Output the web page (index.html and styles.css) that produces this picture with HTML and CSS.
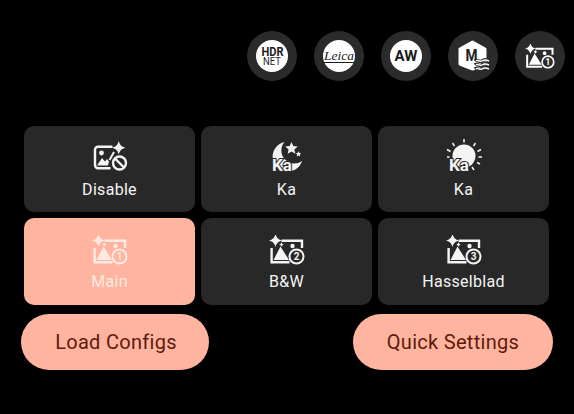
FILE: index.html
```html
<!DOCTYPE html>
<html lang="en">
<head>
<meta charset="utf-8">
<title>Camera settings</title>
<link rel="stylesheet" href="styles.css">
</head>
<body>
<svg class="defs" aria-hidden="true">
  <symbol id="sparkle" viewBox="-10 -10 20 20"><path d="M0-10C1.500-4.500 4-1.500 10 0 4 1.500 1.500 4.500 0 10-1.500 4.500-4 1.500-10 0-4-1.500-1.500-4.500 0-10Z" fill="currentColor"/></symbol>
  <symbol id="lut" viewBox="0 0 36 30">
    <use href="#sparkle" x="0" y="-1" width="13" height="13"/>
    <use href="#sparkle" x="10" y="7" width="5" height="5"/>
    <path d="M12.500 5.800H33V13M2.600 13V27.200H20.500" fill="none" stroke="currentColor" stroke-width="2.400"/>
    <path d="M11.500 11.500 20 25H4.500Z" fill="currentColor"/>
    <circle cx="23.500" cy="11" r="2.200" fill="currentColor"/>
    <circle cx="27.500" cy="21.500" r="7" fill="none" stroke="currentColor" stroke-width="2"/>
  </symbol>
</svg>

<div class="status-row">
  <div class="chip"><div class="disc hdr"><span class="hdr-top">HDR</span><span class="hdr-bottom">NET</span></div></div>
  <div class="chip"><div class="disc"><span class="leica">Leica</span></div></div>
  <div class="chip"><div class="disc"><span class="aw">AW</span></div></div>
  <div class="chip">
    <svg class="chip-full" viewBox="0 0 50 50">
      <path d="M24.500 11 37 18V33L24.500 38 12 33V18Z" fill="#fff" stroke="#fff" stroke-width="3" stroke-linejoin="round"/>
      <text class="m-letter" x="17.500" y="30" textLength="12" lengthAdjust="spacingAndGlyphs">M</text>
      <path d="M27 30c2-2 5 2 7 0s4-2 8 0M27 34c2-2 5 2 7 0s4-2 8 0M27 38c2-2 5 2 7 0s4-2 8 0" fill="none" stroke="#2b2b2b" stroke-width="3.500"/>
      <path d="M28 30c2-2 4 1.500 6 0s4-1.500 7 0M28 34c2-2 4 1.500 6 0s4-1.500 7 0M28 38c2-2 4 1.500 6 0s4-1.500 7 0" fill="none" stroke="#fff" stroke-width="1.500"/>
    </svg>
  </div>
  <div class="chip">
    <svg class="chip-icon" viewBox="0 0 36 30"><use href="#lut"/><text class="num" x="27.500" y="25.200">1</text></svg>
  </div>
</div>

<div class="tiles">
  <div class="tile">
    <svg class="tile-icon" viewBox="0 0 36 30">
      <path d="M18.500 25.300H6a3 3 0 0 1-3-3V6.700a3 3 0 0 1 3-3H20.500" fill="none" stroke="currentColor" stroke-width="2.400"/>
      <circle cx="9.500" cy="10" r="2.400" fill="currentColor"/>
      <path d="M5 22.500 10 15 13 18.500 15 16 17 18.500 16 22.500Z" fill="currentColor"/>
      <path d="M17.500 17 22 9" stroke="currentColor" stroke-width="2"/>
      <use href="#sparkle" x="20" y="-2" width="13.500" height="13.500"/>
      <circle cx="27.500" cy="20" r="6.500" fill="none" stroke="currentColor" stroke-width="2.400"/>
      <path d="M23 15.500 32 24.500" stroke="currentColor" stroke-width="2.400"/>
    </svg>
    <span class="label">Disable</span>
  </div>
  <div class="tile">
    <svg class="tile-icon" viewBox="0 0 36 30">
      <path d="M15.500-1A15 15 0 1 0 33 18 13 13 0 0 1 15.500-1Z" fill="currentColor"/>
      <path d="M22.500-1 24.300 3 28.700 3.500 25.400 6.400 26.300 10.800 22.500 8.500 18.700 10.800 19.600 6.400 16.300 3.500 20.700 3Z" fill="currentColor"/>
      <path d="M29.500 8 30.300 10 32.300 10.200 30.800 11.500 31.200 13.500 29.500 12.400 27.800 13.500 28.200 11.500 26.700 10.200 28.700 10Z" fill="currentColor"/>
      <text class="ka" x="3" y="28">Ka</text>
    </svg>
    <span class="label">Ka</span>
  </div>
  <div class="tile">
    <svg class="tile-icon" viewBox="0 0 36 30">
      <circle cx="18" cy="13" r="11.500" fill="currentColor"/>
      <path d="M18-4V-.500M6.500 0 8.500 3M29.500 0 27.500 3M1 6.500 4.500 8.500M35 6.500 31.500 8.500M1 14H3.500M32.500 14H36M34 21 31 19.500M28 27 26 24" stroke="currentColor" stroke-width="1.500" fill="none"/>
      <text class="ka" x="3" y="28">Ka</text>
    </svg>
    <span class="label">Ka</span>
  </div>
  <div class="tile active">
    <svg class="tile-icon" viewBox="0 0 36 30"><use href="#lut"/><text class="num" x="27.500" y="25.200">1</text></svg>
    <span class="label">Main</span>
  </div>
  <div class="tile">
    <svg class="tile-icon" viewBox="0 0 36 30"><use href="#lut"/><text class="num" x="27.500" y="25.200">2</text></svg>
    <span class="label">B&amp;W</span>
  </div>
  <div class="tile">
    <svg class="tile-icon" viewBox="0 0 36 30"><use href="#lut"/><text class="num" x="27.500" y="25.200">3</text></svg>
    <span class="label">Hasselblad</span>
  </div>
</div>

<div class="actions">
  <button class="pill pill-load">Load Configs</button>
  <button class="pill pill-quick">Quick Settings</button>
</div>
</body>
</html>
```
FILE: styles.css
```css
* { box-sizing: border-box; }

html, body { margin: 0; height: 100%; }

body {
  width: 574px;
  height: 414px;
  overflow: hidden;
  background: #000;
  font-family: Roboto, "Liberation Sans", sans-serif;
  color: #f1f1f1;
}

.defs { position: absolute; width: 0; height: 0; }

.status-row {
  display: flex;
  justify-content: flex-end;
  gap: 17px;
  padding: 31px 9px 0 0;
}

.chip {
  width: 50px;
  height: 50px;
  border-radius: 50%;
  background: #2b2b2b;
  display: flex;
  align-items: center;
  justify-content: center;
  color: #fff;
}

.disc {
  width: 32px;
  height: 32px;
  border-radius: 50%;
  background: #fff;
  color: #1c1c1c;
  display: flex;
  flex-direction: column;
  align-items: center;
  justify-content: center;
}

.hdr-top,
.hdr-bottom {
  display: block;
  transform: scaleX(0.82);
}

.hdr-top { font-size: 13.5px; font-weight: 700; line-height: 10px; }
.hdr-bottom { font-size: 11.5px; font-weight: 400; line-height: 9px; margin-top: 1px; }

.leica {
  font-family: "Liberation Serif", serif;
  font-style: italic;
  font-weight: 400;
  font-size: 13.5px;
  line-height: 13px;
  border-bottom: 1px solid #1c1c1c;
}

.aw { font-size: 15px; font-weight: 700; line-height: 16px; }

.chip-full { width: 50px; height: 50px; }
.chip-icon { width: 30px; height: 25px; }

.m-letter { font-size: 17px; font-weight: 700; fill: #1c1c1c; }

.num {
  font-size: 10px;
  font-weight: 700;
  text-anchor: middle;
  fill: currentColor;
}

.ka {
  font-size: 17px;
  font-weight: 700;
  fill: currentColor;
  stroke: #282828;
  stroke-width: 2px;
  paint-order: stroke;
}

.tiles {
  display: grid;
  grid-template-columns: repeat(3, 171px);
  grid-template-rows: 86px 87px;
  gap: 6px;
  margin: 45px 0 0 24px;
}

.tile {
  display: flex;
  flex-direction: column;
  align-items: center;
  padding-top: 17px;
  border-radius: 10px;
  background: #282828;
  color: #f4f4f4;
}

.tile.active { background: #ffb4a0; color: #ffe9e3; }

.tile-icon { width: 36px; height: 30px; overflow: visible; }

.label {
  margin-top: 7px;
  font-size: 16px;
  line-height: 20px;
  letter-spacing: 0.3px;
}

.actions {
  display: flex;
  justify-content: space-between;
  margin-top: 9px;
  padding: 0 21px;
}

.pill {
  height: 56px;
  border: 0;
  border-radius: 28px;
  background: #ffb4a0;
  color: #5f1a0c;
  font-family: inherit;
  font-size: 20px;
  letter-spacing: 0.3px;
  padding: 0;
}

.pill-load { width: 188px; padding-left: 2px; }
.pill-quick { width: 200px; }
```
